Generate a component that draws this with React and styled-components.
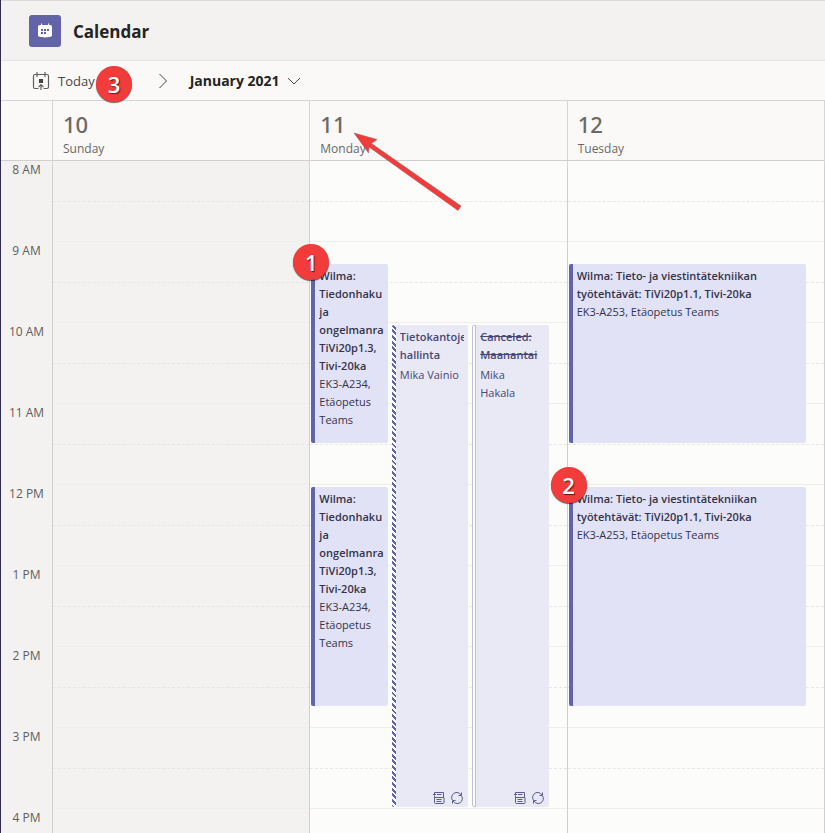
import React from 'react';
import styled, { createGlobalStyle, css } from 'styled-components';

const GlobalStyle = createGlobalStyle`
  * { box-sizing: border-box; }
  body {
    margin: 0;
    background: #f3f2f1;
    color: #252423;
    font-family: "Open Sans", "Noto Sans", sans-serif;
  }
`;

const HOUR = 81;
const START_HOUR = 8;

const Page = styled.div`
  display: flex;
  flex-direction: column;
  height: 100vh;
  overflow: hidden;
  border-left: 1px solid #2f2c4e;
`;

const Header = styled.header`
  display: flex;
  align-items: center;
  gap: 12px;
  height: 61px;
  flex-shrink: 0;
  padding: 1px 28px 0;
  background: #f3f2f1;
  border-top: 1px solid #dcdbda;
  border-bottom: 1px solid #e5e4e3;
`;

const AppIcon = styled.span`
  display: grid;
  place-items: center;
  width: 32px;
  height: 32px;
  border-radius: 3px;
  background: #6264a7;
`;

const Title = styled.h1`
  margin: 0;
  padding-top: 2px;
  font-size: 17px;
  line-height: 24px;
  font-weight: 700;
`;

const Toolbar = styled.div`
  display: flex;
  align-items: center;
  height: 40px;
  flex-shrink: 0;
  padding: 0 30px;
  background: #faf9f8;
  border-bottom: 1px solid #d6d5d3;
`;

const ToolButton = styled.button`
  position: relative;
  display: inline-flex;
  align-items: center;
  gap: 7px;
  height: 32px;
  padding: 0;
  border: 0;
  background: none;
  color: ${(p) => (p.$strong ? '#252423' : '#484644')};
  font: ${(p) => (p.$strong ? '700 14px/20px' : '400 13px/20px')} "Open Sans", "Noto Sans", sans-serif;
`;

const NextButton = styled(ToolButton)`
  margin: 0 22px 0 63px;
`;

const Badge = styled.span`
  position: absolute;
  z-index: 3;
  top: ${(p) => p.$top}px;
  left: ${(p) => p.$left}px;
  display: grid;
  place-items: center;
  width: 36px;
  height: 36px;
  border-radius: 50%;
  background: #f23b3b;
  box-shadow: 0 1px 1px rgba(0, 0, 0, 0.6);
  color: #fff;
  font: 600 22px/32px "Open Sans", "Noto Sans", sans-serif;
  text-shadow: 1px 1px 1px rgba(0, 0, 0, 0.6);
`;

const columns = css`
  display: grid;
  grid-template-columns: 52px repeat(3, minmax(0, 1fr));
`;

const DayHeaders = styled.div`
  ${columns}
  position: relative;
  z-index: 2;
  height: 60px;
  flex-shrink: 0;
  background: #faf9f8;
  border-bottom: 1px solid #d0cfcd;
`;

const DayHeader = styled.div`
  position: relative;
  padding: 8px 10px;
  border-right: 1px solid #d6d5d3;
  color: #6b6966;
`;

const DayNumber = styled.div`
  font-family: "Noto Sans", "Open Sans", sans-serif;
  font-size: 22px;
  line-height: 30px;
  font-weight: 500;
`;

const DayName = styled.div`
  font-size: 12px;
  line-height: 20px;
`;

const Arrow = styled.svg`
  position: absolute;
  top: 29px;
  left: 42px;
  overflow: visible;
`;

const Schedule = styled.main`
  ${columns}
  flex: 1;
  min-height: 0;
  overflow: hidden;
`;

const TimeColumn = styled.div`
  border-right: 1px solid #d0cfcd;
`;

const TimeLabel = styled.div`
  height: ${HOUR}px;
  color: #605e5c;
  font-size: 12px;
  line-height: 18px;
  text-align: center;
`;

const DayColumn = styled.section`
  display: grid;
  align-content: start;
  background: ${(p) => (p.$weekend ? '#f3f2f1' : '#fcfcfa')};
  border-right: 1px solid #d0cfcd;
`;

const Layer = styled.div`
  grid-area: 1 / 1;
  min-width: 0;
`;

const HourCell = styled.div`
  height: ${HOUR}px;
  border-bottom: 1px solid #efeeec;
  &::before {
    content: '';
    display: block;
    height: 40px;
    border-bottom: 1px dashed #e8e7e4;
  }
`;

const Events = styled(Layer)`
  display: grid;
  grid-template-columns: repeat(${(p) => p.$lanes}, minmax(0, 1fr));
  grid-template-rows: repeat(36, calc(${HOUR}px / 4));
  column-gap: 4px;
  padding: 0 18px 0 1px;
`;

const EventSlot = styled.div`
  position: relative;
  grid-column: ${(p) => p.$lane};
  grid-row: ${(p) => p.$from} / ${(p) => p.$to};
  margin: 2px 0;
`;

const bars = {
  busy: css`
    background: #6264a7;
  `,
  tentative: css`
    background: repeating-linear-gradient(45deg, #6264a7 0 2px, #fff 2px 4px);
  `,
  free: css`
    background: #fff;
    border: 1px solid #bdbde6;
    border-radius: 2px 0 0 2px;
  `,
};

const EventCard = styled.article`
  display: grid;
  grid-template-columns: 4px minmax(0, 1fr);
  height: 100%;
  overflow: hidden;
  border-radius: 2px;
  background: ${(p) => (p.$kind === 'busy' ? '#e2e2f6' : '#e9e9f6')};
  color: ${(p) => (p.$kind === 'busy' ? '#33334a' : '#464775')};
`;

const Bar = styled.span`
  ${(p) => bars[p.$kind]}
`;

const EventBody = styled.div`
  display: flex;
  flex-direction: column;
  gap: ${(p) => (p.$kind === 'busy' ? 0 : 2)}px;
  margin: 3px 4px;
  overflow: hidden;
  font-size: 11px;
  line-height: 18px;
`;

const EventTitle = styled.h2`
  margin: 0;
  font-size: 11px;
  line-height: 18px;
  font-weight: 600;
  text-decoration: ${(p) => (p.$canceled ? 'line-through' : 'none')};
`;

const EventDetail = styled.div`
  white-space: pre-line;
`;

const EventIcons = styled.div`
  display: flex;
  justify-content: flex-end;
  gap: 6px;
  margin-top: auto;
  padding-right: 1px;
`;

const CalendarGlyph = () => (
  <svg width="16" height="16" viewBox="0 0 16 16" aria-hidden="true">
    <path d="M4 .5h1V2h6V.5h1V2h1.2c1 0 1.8.8 1.8 1.8v8.7c0 1.2-3 1.9-7 1.9s-7-.7-7-1.9V3.800C1 2.800 1.800 2 2.800 2H4z" fill="#fff" />
    <path d="M7 6h2v2H7zM10 6h2v2h-2zM4 6h2v2H4zM4 9h2v2H4zM7 9h2v2H7z" fill="#6264a7" />
  </svg>
);

const TodayGlyph = () => (
  <svg width="20" height="20" viewBox="0 0 20 20" fill="none" stroke="#605e5c" aria-hidden="true">
    <path d="M7.500 17.500H4A1.500 1.500 0 0 1 2.500 16V5A1.500 1.500 0 0 1 4 3.500h12A1.500 1.500 0 0 1 17.500 5v11a1.500 1.500 0 0 1-1.500 1.500h-3.500M6 1v5M14 1v5M10 19v-5M7.500 16.200l2.500-2.500 2.500 2.500" strokeWidth="1.200" />
    <path d="M8 8h4v4H8z" fill="#484644" stroke="none" />
  </svg>
);

const NotesGlyph = () => (
  <svg width="12" height="12" viewBox="0 0 12 12" fill="none" stroke="#5b5c8a" aria-hidden="true">
    <path d="M1.500 2.500V.5h9v5h-9v-2M0 2.500h3M1.500 5.500v5c0 .6.400 1 1 1h7.500c.6 0 1-.4 1-1v-5M4 2.500h4.500M3.500 7.500h5M3.500 9.500h5" />
  </svg>
);

const RepeatGlyph = () => (
  <svg width="12" height="12" viewBox="0 0 12 12" fill="none" stroke="#5b5c8a" aria-hidden="true">
    <path d="M1.300 8A5 5 0 0 1 10 3M10.700 4A5 5 0 0 1 2 9M10.500.5V3.500H7.500M1.500 11.500V8.500h3" />
  </svg>
);

const days = [
  { number: 10, name: 'Sunday', weekend: true, lanes: 1, events: [] },
  {
    number: 11,
    name: 'Monday',
    arrow: true,
    lanes: 3,
    events: [
      { lane: 1, from: 9.25, to: 11.5, kind: 'busy', title: 'Wilma: Tiedonhaku ja ongelmanra TiVi20p1.3, Tivi-20ka', detail: 'EK3-A234, Etäopetus Teams', badge: 1 },
      { lane: 1, from: 12, to: 14.75, kind: 'busy', title: 'Wilma: Tiedonhaku ja ongelmanra TiVi20p1.3, Tivi-20ka', detail: 'EK3-A234, Etäopetus Teams' },
      { lane: 2, from: 10, to: 16, kind: 'tentative', title: 'Tietokantoje hallinta', detail: 'Mika Vainio', icons: true },
      { lane: 3, from: 10, to: 16, kind: 'free', title: 'Canceled: Maanantai', detail: 'Mika\nHakala', canceled: true, icons: true },
    ],
  },
  {
    number: 12,
    name: 'Tuesday',
    lanes: 1,
    events: [
      { lane: 1, from: 9.25, to: 11.5, kind: 'busy', title: 'Wilma: Tieto- ja viestintätekniikan työtehtävät: TiVi20p1.1, Tivi-20ka', detail: 'EK3-A253, Etäopetus Teams' },
      { lane: 1, from: 12, to: 14.75, kind: 'busy', title: 'Wilma: Tieto- ja viestintätekniikan työtehtävät: TiVi20p1.1, Tivi-20ka', detail: 'EK3-A253, Etäopetus Teams', badge: 2 },
    ],
  },
];

const hours = ['8 AM', '9 AM', '10 AM', '11 AM', '12 PM', '1 PM', '2 PM', '3 PM', '4 PM'];

const rowOf = (hour) => (hour - START_HOUR) * 4 + 1;

function Event({ event }) {
  return (
    <EventSlot $lane={event.lane} $from={rowOf(event.from)} $to={rowOf(event.to)}>
      <EventCard $kind={event.kind}>
        <Bar $kind={event.kind} />
        <EventBody $kind={event.kind}>
          <EventTitle $canceled={event.canceled}>{event.title}</EventTitle>
          <EventDetail>{event.detail}</EventDetail>
          {event.icons && (
            <EventIcons>
              <NotesGlyph />
              <RepeatGlyph />
            </EventIcons>
          )}
        </EventBody>
      </EventCard>
      {event.badge && <Badge $top={-20} $left={-18}>{event.badge}</Badge>}
    </EventSlot>
  );
}

export default function App() {
  return (
    <>
      <GlobalStyle />
      <Page>
        <Header>
          <AppIcon><CalendarGlyph /></AppIcon>
          <Title>Calendar</Title>
        </Header>
        <Toolbar>
          <ToolButton type="button">
            <TodayGlyph />
            Today
            <Badge $top={1} $left={65}>3</Badge>
          </ToolButton>
          <NextButton type="button" aria-label="Next">
            <svg width="10" height="16" viewBox="0 0 10 16" fill="none" stroke="#484644" aria-hidden="true">
              <path d="M1.500 1l7 7-7 7" />
            </svg>
          </NextButton>
          <ToolButton type="button" $strong>
            January 2021
            <svg width="14" height="8" viewBox="0 0 14 8" fill="none" stroke="#484644" aria-hidden="true">
              <path d="M1 1l6 6 6-6" />
            </svg>
          </ToolButton>
        </Toolbar>
        <DayHeaders>
          <DayHeader />
          {days.map((day) => (
            <DayHeader key={day.number}>
              <DayNumber>{day.number}</DayNumber>
              <DayName>{day.name}</DayName>
              {day.arrow && (
                <Arrow width="112" height="82" viewBox="0 0 112 82" aria-hidden="true">
                  <path d="M2 3L25 9.500 19.500 13.500 109 76l-3 4.500L17 17l-.5 6z" fill="#f23b3b" stroke="#8a5a5a" strokeWidth="0.500" />
                </Arrow>
              )}
            </DayHeader>
          ))}
        </DayHeaders>
        <Schedule>
          <TimeColumn>
            {hours.map((hour) => <TimeLabel key={hour}>{hour}</TimeLabel>)}
          </TimeColumn>
          {days.map((day) => (
            <DayColumn key={day.number} $weekend={day.weekend} aria-label={day.name}>
              <Layer>
                {hours.map((hour) => <HourCell key={hour} />)}
              </Layer>
              <Events $lanes={day.lanes}>
                {day.events.map((event) => (
                  <Event key={`${event.lane}-${event.from}`} event={event} />
                ))}
              </Events>
            </DayColumn>
          ))}
        </Schedule>
      </Page>
    </>
  );
}
